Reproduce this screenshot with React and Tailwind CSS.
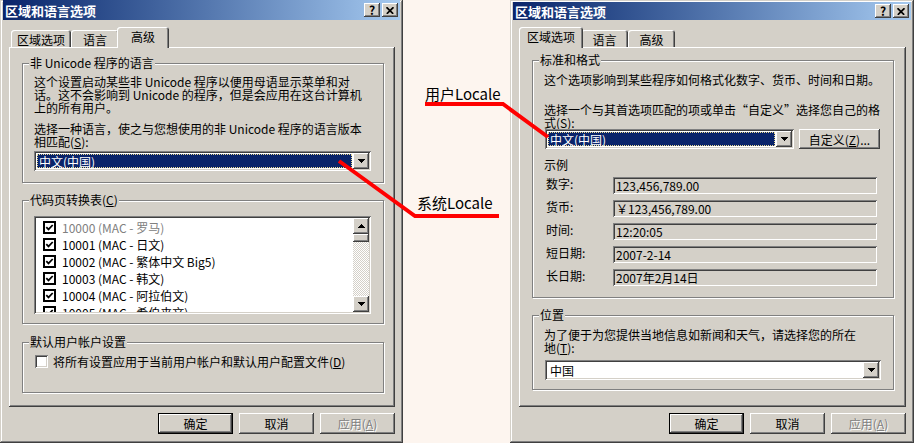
import React from "react";

// win2000 bevels
const frame = "shadow-[inset_-1px_-1px_0_#404040,inset_1px_1px_0_#d4d0c8,inset_-2px_-2px_0_#808080,inset_2px_2px_0_#ffffff]";
const raised = "shadow-[inset_-1px_-1px_0_#404040,inset_1px_1px_0_#ffffff,inset_-2px_-2px_0_#808080]";
const sunken = "shadow-[inset_1px_1px_0_#808080,inset_-1px_-1px_0_#ffffff,inset_2px_2px_0_#404040,inset_-2px_-2px_0_#d4d0c8]";
const panel = "shadow-[inset_-1px_-1px_0_#404040,inset_1px_1px_0_#ffffff,inset_-2px_-2px_0_#808080]";
const etched = "border border-[#808080] shadow-[inset_1px_1px_0_#ffffff,1px_1px_0_#ffffff]";

const Arrow = ({ up }) => (
  <svg width="7" height="4" viewBox="0 0 7 4" shapeRendering="crispEdges" className={up ? "rotate-180" : ""}>
    <path d="M0 0h7v1h-1v1h-1v1h-1v1h-1v-1h-1v-1h-1v-1h-1z" fill="#000" />
  </svg>
);

const TitleBar = ({ h }) => (
  <div className={`flex items-center justify-between ${h} bg-linear-to-r from-[#0a246a] to-[#a6caf0] px-[2px]`}>
    <span className="text-white font-bold text-[13px] leading-none">区域和语言选项</span>
    <div className="flex gap-[2px]">
      <div className={`w-[16px] h-[14px] bg-[#d4d0c8] ${raised} flex items-center justify-center text-[12px] font-bold leading-none`}>?</div>
      <div className={`w-[16px] h-[14px] bg-[#d4d0c8] ${raised} flex items-center justify-center`}>
        <svg width="8" height="7" viewBox="0 0 8 7">
          <path d="M0.5 0.2L7.2 6.8M7.5 0.2L0.8 6.8" stroke="#000" strokeWidth="1.7" />
        </svg>
      </div>
    </div>
  </div>
);

const Tabs = ({ items }) => (
  <div className="flex items-end h-[20px] mt-[7px] ml-[6px] pl-[2px]">
    {items.map((t) => (
      <div
        key={t.label}
        className={`${t.w} flex items-center justify-center bg-[#d4d0c8] rounded-t-[3px] shadow-[inset_1px_1px_0_#ffffff,inset_-1px_0_0_#404040,inset_-2px_0_0_#808080] ${
          t.active ? "h-[21px] -mx-[2px] -mb-px relative z-10 pb-[3px]" : "h-[17px] pt-px"
        }`}
      >
        {t.label}
      </div>
    ))}
  </div>
);

const Group = ({ label, cls, children }) => (
  <div className={`relative ${etched} ${cls}`}>
    <span className="absolute -top-[7px] left-[6px] px-[1px] bg-[#d4d0c8] whitespace-nowrap leading-[12px]">{label}</span>
    {children}
  </div>
);

const Combo = ({ w, text, selected, cls = "" }) => (
  <div className={`${w} h-[20px] bg-white ${sunken} p-[2px] flex ${cls}`}>
    <div className="flex-1 flex p-[1px]">
      {selected ? (
        <div className="flex-1 flex items-center bg-[#0a246a] text-white border border-dotted border-[#e8d890] pl-px">{text}</div>
      ) : (
        <div className="flex-1 flex items-center pl-[2px]">{text}</div>
      )}
    </div>
    <div className={`w-[16px] bg-[#d4d0c8] ${raised} flex items-center justify-center`}>
      <Arrow />
    </div>
  </div>
);

const Btn = ({ children, def, disabled, w = "w-[75px]", h = "h-[21px]", cls = "" }) => (
  <div
    className={`${w} ${h} flex items-center justify-center bg-[#d4d0c8] ${raised} ${def ? "border border-black" : ""} ${
      disabled ? "text-[#808080] [text-shadow:1px_1px_0_#ffffff]" : ""
    } ${cls}`}
  >
    {children}
  </div>
);

const Buttons = () => (
  <div className="flex justify-end gap-[6px] mt-[6px] mr-[5px]">
    <Btn def>确定</Btn>
    <Btn>取消</Btn>
    <Btn disabled>
      应用(<u>A</u>)
    </Btn>
  </div>
);

const Check = () => (
  <div className="w-[13px] h-[13px] border-2 border-black bg-white flex items-center justify-center">
    <svg width="9" height="9" viewBox="0 0 9 9">
      <path d="M1.3 4.2l2.2 2.2 4.2-4.4" stroke="#000" strokeWidth="1.8" fill="none" />
    </svg>
  </div>
);

const codePages = [
  ["10000 (MAC - 罗马)", true],
  ["10001 (MAC - 日文)", false],
  ["10002 (MAC - 繁体中文 Big5)", false],
  ["10003 (MAC - 韩文)", false],
  ["10004 (MAC - 阿拉伯文)", false],
  ["10005 (MAC - 希伯来文)", false],
];

const samples = [
  ["数字:", "123,456,789.00"],
  ["货币:", "￥123,456,789.00"],
  ["时间:", "12:20:05"],
  ["短日期:", "2007-2-14"],
  ["长日期:", "2007年2月14日"],
];

const LeftDialog = () => (
  <div className={`flex flex-col w-[403px] h-full shrink-0 bg-[#d4d0c8] ${frame} px-[3px]`}>
    <TitleBar h="h-[20px]" />
    <Tabs
      items={[
        { label: "区域选项", w: "w-[60px]" },
        { label: "语言", w: "w-[48px]" },
        { label: "高级", w: "w-[52px]", active: true },
      ]}
    />
    <div className={`h-[360px] ml-[6px] mr-[5px] ${panel} pt-[16px] pl-[13px] flex flex-col`}>
      <Group label="非 Unicode 程序的语言" cls="w-[362px] h-[120px] pt-[11px] pl-[11px] whitespace-nowrap">
        <div>这个设置启动某些非 Unicode 程序以便用母语显示菜单和对</div>
        <div>话。这不会影响到 Unicode 的程序，但是会应用在这台计算机</div>
        <div>上的所有用户。</div>
        <div className="mt-[8px]">选择一种语言，使之与您想使用的非 Unicode 程序的语言版本</div>
        <div>
          相匹配(<u>S</u>):
        </div>
        <Combo w="w-[337px]" text="中文(中国)" selected cls="mt-[3px]" />
      </Group>

      <Group label={<>代码页转换表(<u>C</u>)</>} cls="w-[362px] h-[124px] mt-[17px] pt-[15px] pl-[11px]">
        <div className={`w-[337px] h-[98px] bg-white ${sunken} p-[2px] flex`}>
          <div className="flex-1 overflow-hidden pt-px">
            {codePages.map(([t, dim]) => (
              <div key={t} className="h-[17px] flex items-center pl-[7px] whitespace-nowrap">
                <Check />
                <span className={`ml-[6px] ${dim ? "text-[#808080]" : ""}`}>{t}</span>
              </div>
            ))}
          </div>
          <div className="w-[16px] flex flex-col">
            <div className={`h-[16px] bg-[#d4d0c8] ${raised} flex items-center justify-center`}>
              <Arrow up />
            </div>
            <div className={`h-[8px] bg-[#d4d0c8] ${raised}`} />
            <div className="flex-1 bg-[repeating-conic-gradient(#d4d0c8_0_25%,#ffffff_0_50%)] bg-size-[2px_2px]" />
            <div className={`h-[16px] bg-[#d4d0c8] ${raised} flex items-center justify-center`}>
              <Arrow />
            </div>
          </div>
        </div>
      </Group>

      <Group label="默认用户帐户设置" cls="w-[362px] h-[51px] mt-[18px] pt-[12px] pl-[12px]">
        <div className="flex items-center whitespace-nowrap">
          <div className={`w-[13px] h-[13px] bg-white ${sunken}`} />
          <span className="ml-[5px]">
            将所有设置应用于当前用户帐户和默认用户配置文件(<u>D</u>)
          </span>
        </div>
      </Group>
    </div>
    <Buttons />
  </div>
);

const RightDialog = () => (
  <div className={`flex flex-col w-[404px] h-full shrink-0 bg-[#d4d0c8] ${frame} px-[3px] pt-[2px]`}>
    <TitleBar h="h-[18px]" />
    <Tabs
      items={[
        { label: "区域选项", w: "w-[64px]", active: true },
        { label: "语言", w: "w-[47px]" },
        { label: "高级", w: "w-[47px]" },
      ]}
    />
    <div className={`h-[360px] ml-[6px] mr-[5px] ${panel} pt-[13px] pl-[13px] flex flex-col`}>
      <Group label="标准和格式" cls="w-[362px] h-[238px] pt-[12px] pl-[11px] whitespace-nowrap">
        <div>这个选项影响到某些程序如何格式化数字、货币、时间和日期。</div>
        <div className="mt-[17px]">选择一个与其首选项匹配的项或单击“自定义”选择您自己的格</div>
        <div>
          式(<u>S</u>):
        </div>
        <div className="flex ml-[1px]">
          <Combo w="w-[249px]" text="中文(中国)" selected />
          <Btn w="w-[81px]" h="h-[20px]" cls="ml-[5px]">
            自定义(<u>Z</u>)...
          </Btn>
        </div>
        <div className="mt-[9px]">示例</div>
        <div className="flex flex-col gap-[6px] mt-[6px]">
          {samples.map(([k, v]) => (
            <div key={k} className="flex items-start">
              <div className="w-[69px] pl-[2px]">{k}</div>
              <div className={`w-[264px] h-[17px] ${sunken} flex items-center pl-[3px]`}>{v}</div>
            </div>
          ))}
        </div>
      </Group>

      <Group label="位置" cls="w-[362px] h-[75px] mt-[17px] pt-[12px] pl-[11px] whitespace-nowrap">
        <div>为了便于为您提供当地信息如新闻和天气，请选择您的所在</div>
        <div>
          地(<u>T</u>):
        </div>
        <Combo w="w-[336px]" text="中国" cls="mt-[6px] ml-[1px]" />
      </Group>
    </div>
    <Buttons />
  </div>
);

export default function App() {
  return (
    <div className="relative flex w-[914px] h-[443px] overflow-hidden text-[12px] leading-[13px] text-black font-['Noto_Sans_CJK_SC',sans-serif]">
      <LeftDialog />

      {/* annotation column */}
      <div className="w-[107px] h-full shrink-0 bg-[#fdf5ef] flex flex-col text-[15px] leading-[15px] whitespace-nowrap">
        <div className="mt-[86px] ml-[22px]">用户Locale</div>
        <div className="mt-[94px] ml-[14px]">系统Locale</div>
      </div>

      <RightDialog />

      <svg className="absolute inset-0 pointer-events-none" width="914" height="443" viewBox="0 0 914 443">
        <path d="M425 104H503L548 137" stroke="#ff0000" strokeWidth="4" fill="none" />
        <path d="M339 161L415 216H499" stroke="#ff0000" strokeWidth="4" fill="none" />
      </svg>
    </div>
  );
}
